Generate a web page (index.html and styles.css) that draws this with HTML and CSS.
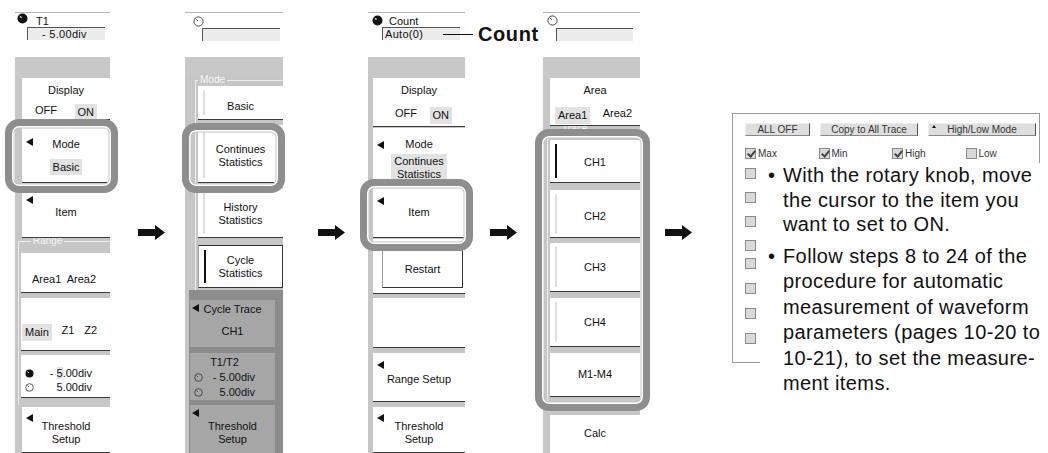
FILE: index.html
```html
<!DOCTYPE html>
<html lang="en">
<head>
  <meta charset="UTF-8">
  <title>Statistics - selecting measurement items</title>
  <link rel="stylesheet" href="styles.css">
</head>
<body>

<div class="figure">

  <!-- 1: statistics menu, Mode = Basic -->
  <div class="panel p1">
    <div class="head">
      <svg class="knob" width="11" height="11" viewBox="0 0 11 11"><circle cx="5.5" cy="5.5" r="5" fill="#111"/><path d="M3 3.4l1.6 1.2" stroke="#fff" stroke-width="1.2"/></svg>
      <div class="field">
        <div class="field-label">T1</div>
        <div class="field-box">- 5.00div</div>
      </div>
    </div>
    <div class="band"></div>
    <div class="body">
      <div class="btn display">
        <div>Display</div>
        <div class="opts"><span>OFF</span><span class="sel">ON</span></div>
      </div>
      <div class="btn mode">
        <i class="tri"></i>
        <div>Mode</div>
        <div class="value"><span class="sel">Basic</span></div>
      </div>
      <div class="btn item">
        <i class="tri"></i>
        <div>Item</div>
      </div>
      <div class="group range">
        <div class="group-label">Range</div>
        <div class="btn area">
          <div class="opts"><span>Area1</span><span>Area2</span></div>
        </div>
        <div class="btn zoom">
          <div class="opts"><span class="sel">Main</span><span>Z1</span><span>Z2</span></div>
        </div>
        <div class="btn cursors">
          <div class="cur">
            <svg width="9" height="9" viewBox="0 0 9 9"><circle cx="4.5" cy="4.5" r="4" fill="#111"/><path d="M2.5 2.8l1.3 1" stroke="#fff" stroke-width="1"/></svg>
            <span>- <span class="hl">5</span>.00div</span>
          </div>
          <div class="cur">
            <svg width="9" height="9" viewBox="0 0 9 9"><circle cx="4.5" cy="4.5" r="3.8" fill="#fff" stroke="#333" stroke-width=".8"/><path d="M2.6 2.6l1.4 1.4" stroke="#333" stroke-width=".8"/></svg>
            <span>5.00div</span>
          </div>
        </div>
      </div>
      <div class="btn threshold">
        <i class="tri"></i>
        <div>Threshold</div>
        <div>Setup</div>
      </div>
    </div>
    <div class="ring"></div>
  </div>

  <div class="step"><svg width="27" height="15" viewBox="0 0 27 15"><path d="M0 4h17V0l10 7.5L17 15v-4H0z" fill="#111"/></svg></div>

  <!-- 2: Mode list -->
  <div class="panel p2">
    <div class="head">
      <svg class="knob" width="11" height="11" viewBox="0 0 11 11"><circle cx="5.5" cy="5.5" r="4.6" fill="#fff" stroke="#333" stroke-width=".9"/><path d="M3.3 3.3l1.7 1.7" stroke="#333" stroke-width=".9"/></svg>
      <div class="field">
        <div class="field-box"></div>
      </div>
    </div>
    <div class="band"></div>
    <div class="body">
      <div class="group mode-list">
        <div class="group-label">Mode</div>
        <div class="btn opt basic"><i class="ind"></i><div>Basic</div></div>
        <div class="btn opt cont"><i class="ind"></i><div>Continues</div><div>Statistics</div></div>
        <div class="btn opt hist"><i class="ind"></i><div>History</div><div>Statistics</div></div>
        <div class="btn opt cycle"><i class="ind on"></i><div>Cycle</div><div>Statistics</div></div>
      </div>
      <div class="sub">
        <div class="sub-btn trace">
          <i class="tri"></i>
          <div>Cycle Trace</div>
          <div class="value">CH1</div>
        </div>
        <div class="sub-btn t1t2">
          <div>T1/T2</div>
          <div class="cur">
            <svg width="9" height="9" viewBox="0 0 9 9"><circle cx="4.5" cy="4.5" r="3.8" fill="none" stroke="#333" stroke-width=".8"/><path d="M2.6 2.6l1.4 1.4" stroke="#333" stroke-width=".8"/></svg>
            <span>- 5.00div</span>
          </div>
          <div class="cur">
            <svg width="9" height="9" viewBox="0 0 9 9"><circle cx="4.5" cy="4.5" r="3.8" fill="none" stroke="#333" stroke-width=".8"/><path d="M2.6 2.6l1.4 1.4" stroke="#333" stroke-width=".8"/></svg>
            <span>5.00div</span>
          </div>
        </div>
        <div class="sub-btn threshold">
          <i class="tri"></i>
          <div>Threshold</div>
          <div>Setup</div>
        </div>
      </div>
    </div>
    <div class="ring"></div>
  </div>

  <div class="step"><svg width="27" height="15" viewBox="0 0 27 15"><path d="M0 4h17V0l10 7.5L17 15v-4H0z" fill="#111"/></svg></div>

  <!-- 3: statistics menu, Mode = Continues Statistics -->
  <div class="panel p3">
    <div class="head">
      <svg class="knob" width="11" height="11" viewBox="0 0 11 11"><circle cx="5.5" cy="5.5" r="5" fill="#111"/><path d="M3 3.4l1.6 1.2" stroke="#fff" stroke-width="1.2"/></svg>
      <div class="field">
        <div class="field-label">Count</div>
        <div class="field-box">Auto(0)</div>
      </div>
    </div>
    <div class="callout"><i class="callout-line"></i><span>Count</span></div>
    <div class="band"></div>
    <div class="body">
      <div class="btn display">
        <div>Display</div>
        <div class="opts"><span>OFF</span><span class="sel">ON</span></div>
      </div>
      <div class="btn mode">
        <i class="tri"></i>
        <div>Mode</div>
        <div class="value sel">Continues<br>Statistics</div>
      </div>
      <div class="btn item">
        <i class="tri"></i>
        <div>Item</div>
      </div>
      <div class="btn restart-slot">
        <div class="restart">Restart</div>
      </div>
      <div class="btn blank"></div>
      <div class="btn range-setup">
        <i class="tri"></i>
        <div>Range Setup</div>
      </div>
      <div class="btn threshold">
        <i class="tri"></i>
        <div>Threshold</div>
        <div>Setup</div>
      </div>
    </div>
    <div class="ring"></div>
  </div>

  <div class="step"><svg width="27" height="15" viewBox="0 0 27 15"><path d="M0 4h17V0l10 7.5L17 15v-4H0z" fill="#111"/></svg></div>

  <!-- 4: Item list -->
  <div class="panel p4">
    <div class="head">
      <svg class="knob" width="11" height="11" viewBox="0 0 11 11"><circle cx="5.5" cy="5.5" r="4.6" fill="#fff" stroke="#333" stroke-width=".9"/><path d="M3.3 3.3l1.7 1.7" stroke="#333" stroke-width=".9"/></svg>
      <div class="field">
        <div class="field-box"></div>
      </div>
    </div>
    <div class="band"></div>
    <div class="body">
      <div class="btn area-sel">
        <div>Area</div>
        <div class="opts"><span class="sel">Area1</span><span>Area2</span></div>
      </div>
      <div class="group trace-list">
        <div class="group-label">Trace</div>
        <div class="btn opt ch1"><i class="ind on"></i><div>CH1</div></div>
        <div class="btn opt ch2"><i class="ind"></i><div>CH2</div></div>
        <div class="btn opt ch3"><i class="ind"></i><div>CH3</div></div>
        <div class="btn opt ch4"><i class="ind"></i><div>CH4</div></div>
        <div class="btn opt math"><div>M1-M4</div></div>
      </div>
      <div class="btn calc"><div>Calc</div></div>
    </div>
    <div class="ring"></div>
  </div>

  <div class="step"><svg width="27" height="15" viewBox="0 0 27 15"><path d="M0 4h17V0l10 7.5L17 15v-4H0z" fill="#111"/></svg></div>

  <!-- 5: item setup dialog with notes -->
  <div class="dialog">
    <div class="dlg-buttons">
      <span class="dlg-btn all-off">ALL OFF</span>
      <span class="dlg-btn copy">Copy to All Trace</span>
      <span class="dlg-btn hilo"><i class="up"></i>High/Low Mode</span>
    </div>
    <div class="checks">
      <span class="check"><i class="cb on"></i>Max</span>
      <span class="check"><i class="cb on"></i>Min</span>
      <span class="check"><i class="cb on"></i>High</span>
      <span class="check"><i class="cb"></i>Low</span>
    </div>
    <div class="cb-col">
      <i class="cb"></i><i class="cb"></i><i class="cb"></i><i class="cb"></i>
    </div>
    <div class="cb-col lower">
      <i class="cb"></i><i class="cb"></i><i class="cb"></i><i class="cb"></i>
    </div>

    <ul class="note">
      <li>With the rotary knob, move the cursor to the item you want to set to ON.</li>
      <li class="steps">Follow steps 8 to 24 of the procedure for automatic measurement of waveform parameters (pages 10-20 to 10-21), to set the measure-<br>ment items.</li>
    </ul>
  </div>

</div>

</body>
</html>
```

FILE: styles.css
```css
* {
  box-sizing: border-box;
}

body {
  margin: 0;
  background: #fff;
  font-family: "Liberation Sans", Arial, sans-serif;
  color: #111;
}

.figure {
  display: flex;
  align-items: flex-start;
  height: 453px;
  overflow: hidden;
  padding-left: 15px;
}

/* ---------- instrument menu column ---------- */

.panel {
  position: relative;
  flex-shrink: 0;
  margin-top: 12px;
  height: 441px;
  border-top: 1px solid #b4b4b4;
  display: flex;
  flex-direction: column;
  font-size: 11px;
  line-height: 13px;
}

.p1 { width: 95px; }
.p2 { width: 98px; }
.p3 { width: 97px; }
.p4 { width: 97px; }

.head {
  height: 44px;
  flex-shrink: 0;
  display: flex;
  align-items: flex-start;
  padding-left: 2px;
}

.knob {
  display: block;
  flex-shrink: 0;
}

.field {
  flex: 1;
  margin-left: -1px;
  margin-right: 5px;
  padding-top: 3px;
}

.field-label {
  height: 11px;
  line-height: 11px;
  padding-left: 9px;
}

.field-box {
  height: 13px;
  line-height: 12px;
  border-top: 1px solid #555;
  border-left: 1px solid #555;
  background: #ececec;
  padding-left: 14px;
  letter-spacing: .3px;
}

.p2 .head { padding-left: 8px; padding-top: 3px; }
.p2 .field { padding-top: 12px; margin-left: -2px; margin-right: 3px; }
.p3 .head { padding-left: 4px; padding-top: 2px; }
.p3 .field { padding-top: 1px; }
.p3 .field-label { padding-left: 7px; }
.p3 .field-box { padding-left: 2px; }
.p4 .head { padding-left: 4px; padding-top: 2px; }
.p4 .field { padding-top: 13px; margin-left: -2px; margin-right: 7px; }

.callout {
  position: absolute;
  left: 75px;
  top: 9px;
  display: flex;
  align-items: center;
}

.callout-line {
  width: 30px;
  height: 1px;
  background: #111;
}

.callout span {
  margin-left: 5px;
  font-size: 20px;
  font-weight: bold;
  line-height: 24px;
  letter-spacing: .6px;
}

.band {
  height: 21px;
  flex-shrink: 0;
  background: #c8c8c8;
}

.body {
  flex: 1;
  display: flex;
  flex-direction: column;
  background: #c6c6c6;
  padding-left: 7px;
}

.btn {
  position: relative;
  flex-shrink: 0;
  display: flex;
  flex-direction: column;
  align-items: center;
  background: #fff;
  border-bottom: 1px solid #3a3a3a;
}

.tri {
  position: absolute;
  left: 4px;
  width: 0;
  height: 0;
  border-top: 4px solid transparent;
  border-bottom: 4px solid transparent;
  border-right: 7px solid #111;
}

.sel {
  background: #e2e2e2;
  padding: 2px 3px;
}

.hl {
  background: #e2e2e2;
}

.opts {
  display: flex;
  justify-content: space-between;
  width: 100%;
}

.group {
  flex-shrink: 0;
  display: flex;
  flex-direction: column;
  border-top: 1px solid #ededed;
  border-left: 1px solid #ededed;
}

.group-label {
  align-self: flex-start;
  height: 12px;
  margin: -7px 0 0 10px;
  padding: 0 2px;
  background: #c6c6c6;
  color: #f4f4f4;
  font-size: 10px;
  line-height: 12px;
}

.cur {
  display: flex;
  align-items: center;
  justify-content: space-between;
  width: 100%;
  height: 14px;
}

.cur svg {
  display: block;
}

/* option buttons with a selection bar on the left */
.opt .ind {
  position: absolute;
  left: 5px;
  top: 4px;
  bottom: 4px;
  width: 2px;
  background: #dcdcdc;
}

.opt .ind.on {
  background: #111;
}

.ring {
  position: absolute;
  border: 7px solid #8e8e8e;
  border-radius: 14px;
  box-shadow: inset 0 0 0 1.5px #fff, inset 0 0 0 2.5px #c4c4c4;
  pointer-events: none;
}

/* step 1 */
.p1 .display { height: 42px; padding-top: 6px; }
.p1 .display .opts { margin-top: 7px; padding: 0 13px; }
.p1 .mode { margin-top: 4px; height: 59px; padding-top: 14px; }
.p1 .mode .tri { top: 14px; }
.p1 .mode .value { margin-top: 10px; }
.p1 .item { margin-top: 4px; height: 51px; padding-top: 19px; }
.p1 .item .tri { top: 9px; }
.p1 .range { margin: 3px 0 0 -4px; height: 164px; padding-left: 2px; }
.p1 .area { margin-top: 6px; height: 40px; padding-top: 20px; }
.p1 .area .opts { padding: 0 14px 0 11px; }
.p1 .zoom { margin-top: 5px; height: 53px; padding-top: 26px; }
.p1 .zoom .opts { padding: 0 13px 0 1px; }
.p1 .cursors { margin-top: 4px; height: 43px; padding: 11px 18px 0 4px; }
.p1 .threshold { margin-top: 2px; flex: 1; padding-top: 13px; }
.p1 .threshold .tri { top: 7px; }
.p1 .ring { left: -10px; top: 106px; width: 113px; height: 74px; }

/* step 2 */
.p2 .body { padding-left: 0; }
.p2 .mode-list { margin: 2px 0 0 10px; height: 210px; padding-left: 2px; }
.p2 .mode-list .group-label { margin-left: 0; }
.p2 .basic { height: 34px; padding-top: 14px; }
.p2 .cont { margin-top: 5px; height: 58px; padding-top: 18px; }
.p2 .hist { margin-top: 6px; height: 49px; padding-top: 12px; }
.p2 .cycle { margin-top: 7px; height: 43px; padding-top: 8px; border: 1px solid #333; border-left-color: #999; }
.p2 .sub {
  flex: 1;
  display: flex;
  flex-direction: column;
  margin-left: 4px;
  padding: 10px 8px 0 1px;
  background: #8c8c8c;
}
.sub-btn {
  position: relative;
  flex-shrink: 0;
  display: flex;
  flex-direction: column;
  align-items: center;
  background: #a6a6a6;
}
.p2 .trace { height: 47px; padding-top: 3px; }
.p2 .trace .tri { top: 4px; left: 2px; }
.p2 .trace .value { margin-top: 9px; }
.p2 .t1t2 { margin-top: 6px; height: 47px; padding: 3px 20px 0 4px; }
.p2 .t1t2 .cur { margin-top: 1px; }
.p2 .threshold { margin-top: 5px; flex: 1; padding-top: 15px; }
.p2 .threshold .tri { top: 4px; left: 2px; }
.p2 .ring { left: -3px; top: 110px; width: 103px; height: 70px; }

/* step 3 */
.p3 .body { padding-left: 5px; }
.p3 .display { height: 49px; padding-top: 6px; }
.p3 .display .opts { margin-top: 10px; padding: 0 13px 0 22px; }
.p3 .mode { margin-top: 1px; height: 57px; padding-top: 10px; }
.p3 .mode .tri { top: 13px; }
.p3 .mode .value { margin-top: 3px; padding: 1px 3px; text-align: center; }
.p3 .item { height: 53px; padding-top: 21px; }
.p3 .item .tri { top: 12px; }
.p3 .restart-slot { margin-top: 1px; height: 55px; padding: 11px 2px 5px 9px; align-items: stretch; }
.restart {
  flex: 1;
  display: flex;
  align-items: center;
  justify-content: center;
  border: 1px solid #999;
  border-right-color: #333;
  border-bottom-color: #333;
}
.p3 .blank { margin-top: 4px; height: 50px; }
.p3 .range-setup { margin-top: 5px; height: 49px; padding-top: 20px; }
.p3 .range-setup .tri { top: 8px; }
.p3 .threshold { margin-top: 5px; flex: 1; padding-top: 13px; }
.p3 .threshold .tri { top: 7px; }
.p3 .ring { left: -8px; top: 166px; width: 113px; height: 72px; }

/* step 4 */
.p4 .area-sel { height: 48px; padding-top: 6px; }
.p4 .area-sel .opts { margin-top: 10px; padding: 0 8px 0 5px; }
.p4 .trace-list { margin: 3px 0 0 -3px; height: 282px; padding-left: 2px; }
.p4 .ch1 { margin-top: 5px; height: 43px; padding-top: 16px; }
.p4 .ch2 { margin-top: 7px; height: 48px; padding-top: 20px; }
.p4 .ch3 { margin-top: 5px; height: 49px; padding-top: 18px; }
.p4 .ch4 { margin-top: 6px; height: 49px; padding-top: 18px; }
.p4 .math { margin-top: 6px; height: 44px; padding-top: 15px; }
.p4 .calc { margin-top: 4px; flex: 1; padding-top: 12px; border-bottom: 0; }
.p4 .ring { left: -8px; top: 116px; width: 115px; height: 282px; }

/* ---------- arrows between steps ---------- */

.step {
  flex-shrink: 0;
  padding-top: 225px;
}

.step svg {
  display: block;
}

.p1 + .step { width: 75px; padding-left: 28px; }
.p2 + .step { width: 85px; padding-left: 35px; }
.p3 + .step { width: 78px; padding-left: 25px; }
.p4 + .step { width: 92px; padding-left: 25px; }

/* ---------- item dialog ---------- */

.dialog {
  position: relative;
  flex-shrink: 0;
  width: 308px;
  height: 250px;
  margin-top: 113px;
  padding: 9px 0 0 12px;
  border: 1px solid #9a9a9a;
  font-size: 10px;
  color: #333;
}

.dlg-buttons {
  display: flex;
  gap: 10px;
}

.dlg-btn {
  position: relative;
  height: 13px;
  line-height: 12px;
  text-align: center;
  background: #dedede;
  border: 1px solid #eee;
  border-right-color: #555;
  border-bottom-color: #888;
}

.all-off { width: 65px; }
.copy { width: 98px; }
.hilo { width: 108px; }

.up {
  position: absolute;
  left: 3px;
  top: 1px;
  border-left: 2px solid transparent;
  border-right: 2px solid transparent;
  border-bottom: 3px solid #111;
}

.checks {
  display: flex;
  margin-top: 12px;
}

.check {
  display: flex;
  align-items: center;
  width: 75px;
  height: 11px;
  line-height: 11px;
}

.cb {
  position: relative;
  display: block;
  width: 11px;
  height: 11px;
  margin-right: 2px;
  border: 1px solid #8a8a8a;
  background: #d9d9d9;
}

.cb.on::after {
  content: "";
  position: absolute;
  left: 3px;
  top: 0;
  width: 3px;
  height: 6px;
  border-right: 2px solid #444;
  border-bottom: 2px solid #444;
  transform: rotate(40deg);
}

.cb-col {
  display: flex;
  flex-direction: column;
  gap: 13px;
  margin-top: 9px;
}

.cb-col.lower {
  gap: 14px;
  margin-top: 7px;
}

.note {
  position: absolute;
  left: 27px;
  top: 49px;
  width: 290px;
  height: 240px;
  margin: 0;
  padding: 0 0 0 23px;
  list-style: none;
  background: #fff;
  color: #111;
  font-size: 20px;
  line-height: 24.5px;
  letter-spacing: .4px;
}

.note li {
  position: relative;
}

.note li.steps {
  margin-top: 7px;
  line-height: 25.6px;
}

.note li::before {
  content: "\2022";
  position: absolute;
  left: -15px;
}
```
